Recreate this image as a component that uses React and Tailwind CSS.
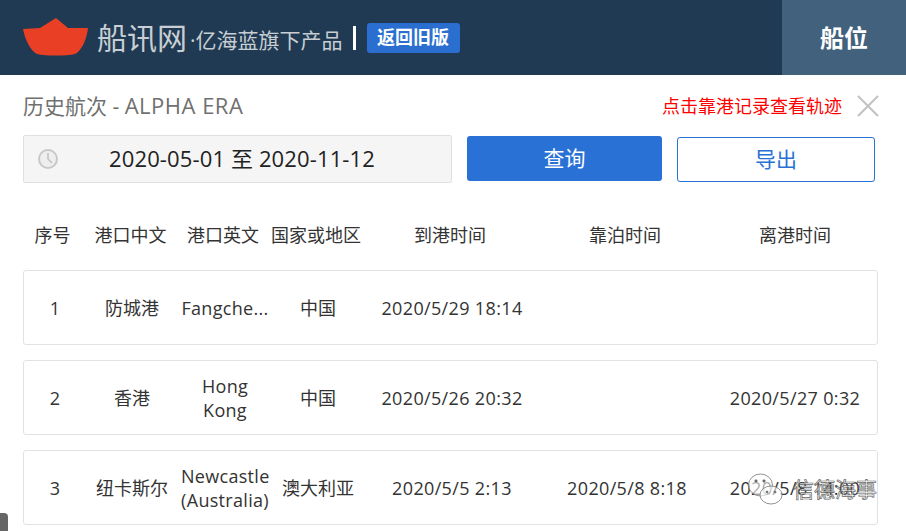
const font = { fontFamily: '"Open Sans", "Noto Sans CJK SC", sans-serif' };

const headCols = "grid grid-cols-[65px_91px_94px_92px_176px_174px_166px] items-center text-center";
const rowCols = "grid grid-cols-[62px_92px_94px_92px_176px_174px_162px] items-center text-center";

const rows = [
  ["1", "防城港", "Fangche...", "中国", "2020/5/29 18:14", "", ""],
  ["2", "香港", "Hong Kong", "中国", "2020/5/26 20:32", "", "2020/5/27 0:32"],
  ["3", "纽卡斯尔", "Newcastle (Australia)", "澳大利亚", "2020/5/5 2:13", "2020/5/8 8:18", "2020/5/8 14:00"],
];

function Logo() {
  return (
    <svg width="68" height="40" viewBox="0 0 68 40" className="shrink-0">
      <path d="M1 11 L18 10 L34 0 L46 10 L66 10 C65 20 60 33 53 36 C44 38 24 38 15 36 C9 33 3 22 1 11 Z" fill="#e94025" />
    </svg>
  );
}

function cellClass(i) {
  if (i >= 4) return "block tracking-[0.35px] whitespace-nowrap";
  if (i === 2) return "block px-[3px] tracking-[0.3px]";
  return "block px-[3px]";
}

export default function App() {
  return (
    <div style={font} className="relative w-[906px] h-[531px] overflow-hidden bg-white text-[#333]">
      <header className="h-[75px] bg-[#1f3a52] flex items-center">
        <div className="pl-[22px] flex items-center flex-1">
          <Logo />
          <span className="ml-[7px] text-[30px] leading-none text-[#c8ced3]">船讯网</span>
          <span className="ml-[3px] mt-[5px] text-[21px] leading-none text-[#c8ced3]">·亿海蓝旗下产品</span>
          <span className="ml-[10px] w-[3px] h-[24px] bg-white" />
          <span className="ml-[11px] w-[93px] h-[30px] rounded-[3px] bg-[#2a6fd0] text-white font-bold text-[18px] flex items-center justify-center">返回旧版</span>
        </div>
        <div className="w-[124px] h-full bg-[#42617c] flex items-center justify-center text-white font-bold text-[24px]">船位</div>
      </header>

      <div className="pl-[23px] pr-[28px]">
        <div className="h-[61px] flex items-center justify-between">
          <span className="text-[21px] text-[#707070]">历史航次 - <span className="text-[22px] tracking-[0.5px]">ALPHA ERA</span></span>
          <div className="flex items-center gap-[14px]">
            <span className="text-[18px] text-[#fe0000] leading-none">点击靠港记录查看轨迹</span>
            <svg width="24" height="24" viewBox="0 0 24 24" className="-mr-[2px]">
              <path d="M2 2 L22 22 M22 2 L2 22" stroke="#c4c4c4" strokeWidth="2.2" />
            </svg>
          </div>
        </div>

        <div className="flex items-start mt-[-1px]">
          <div className="w-[429px] h-[48px] bg-[#f5f5f5] border border-[#e0e0e0] rounded-[2px] flex items-center">
            <svg width="22" height="22" viewBox="0 0 22 22" className="ml-[13px] shrink-0">
              <circle cx="11" cy="11" r="9" fill="#eee" stroke="#c8c8c8" strokeWidth="2" />
              <path d="M11 5 V11 L15 15" fill="none" stroke="#c0c0c0" strokeWidth="1.5" />
            </svg>
            <span className="ml-[50px] mt-[-1px] text-[22px] tracking-[0.13px] text-[#222] whitespace-nowrap">2020-05-01 至 2020-11-12</span>
          </div>
          <button className="ml-[15px] mt-[1px] w-[195px] h-[45px] rounded-[3px] bg-[#2a71d6] text-white text-[21px]">查询</button>
          <button className="ml-[15px] mt-[2px] w-[198px] h-[45px] rounded-[3px] border border-[#2a71d6] bg-white text-[#2a71d6] text-[21px]">导出</button>
        </div>

        <div className={`${headCols} h-[30px] mt-[37px] -ml-[3px] text-[18px] text-[#333] whitespace-nowrap`}>
          <span>序号</span>
          <span>港口中文</span>
          <span>港口英文</span>
          <span>国家或地区</span>
          <span>到港时间</span>
          <span>靠泊时间</span>
          <span>离港时间</span>
        </div>

        <div className="mt-[20px] flex flex-col gap-[15px] w-[855px]">
          {rows.map((r) => (
            <div key={r[0]} className={`${rowCols} h-[75px] shrink-0 border border-[#e2e2e2] rounded-[3px] text-[18px] leading-[24px] text-[#333]`}>
              {r.map((c, i) => (
                <span key={i} className={cellClass(i)}>{c}</span>
              ))}
            </div>
          ))}
        </div>
      </div>

      <div className="absolute left-0 top-[513px] w-[8px] h-[18px] bg-[#666] rounded-tr-[4px]" />

      <div className="absolute left-[748px] top-[473px] flex items-center">
        <svg width="35" height="33" viewBox="0 0 35 33" fill="none" stroke="#777" strokeWidth="0.8">
          <ellipse cx="12.5" cy="12" rx="12" ry="11" fill="white" fillOpacity="0.6" />
          <ellipse cx="23" cy="22" rx="11" ry="9" fill="white" fillOpacity="0.6" />
          <circle cx="8" cy="8" r="1.2" fill="#555" />
          <circle cx="16" cy="8" r="1.2" fill="#555" />
          <circle cx="19" cy="19" r="1" fill="#555" />
          <circle cx="27" cy="19" r="1" fill="#555" />
        </svg>
        <span className="ml-[10px] text-[21px] leading-none text-white/70 [-webkit-text-stroke:0.7px_#666] whitespace-nowrap">信德海事</span>
      </div>
    </div>
  );
}
